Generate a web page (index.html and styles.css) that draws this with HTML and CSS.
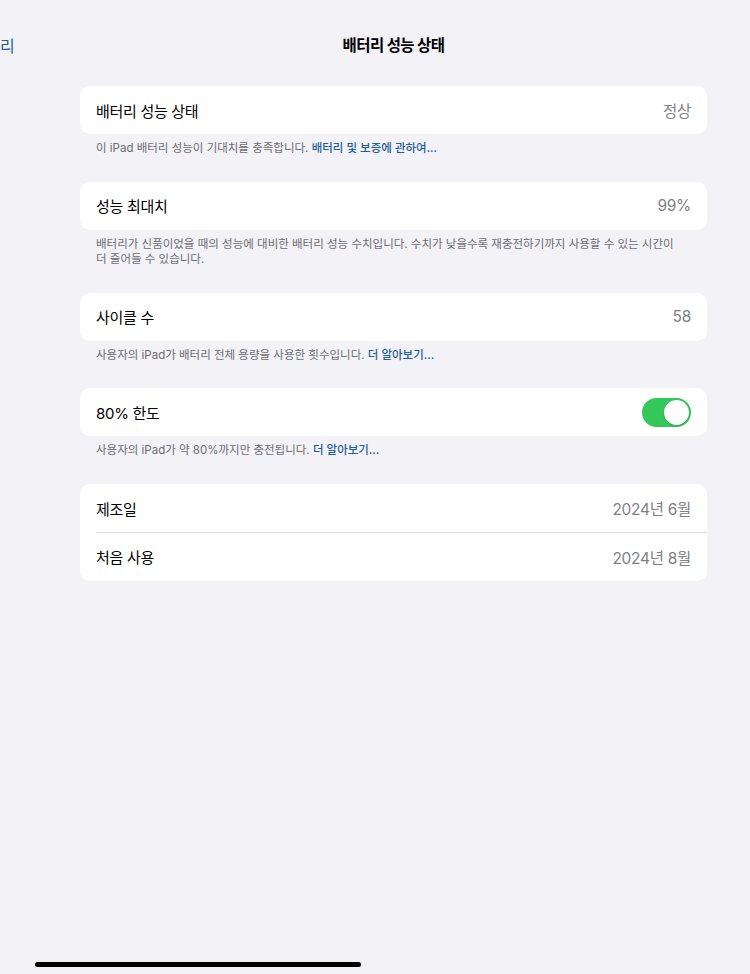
FILE: index.html
```html
<!DOCTYPE html>
<html lang="ko">
<head>
<meta charset="utf-8">
<title>배터리 성능 상태</title>
<link rel="stylesheet" href="styles.css">
</head>
<body>
<div class="screen">
  <header class="nav">
    <span class="back">리</span>
    <h1 class="title">배터리 성능 상태</h1>
  </header>
  <main class="content">
    <section class="group">
      <div class="card">
        <div class="row"><span class="label">배터리 성능 상태</span><span class="value">정상</span></div>
      </div>
      <p class="footer">이 iPad 배터리 성능이 기대치를 충족합니다. <a class="link">배터리 및 보증에 관하여...</a></p>
    </section>
    <section class="group">
      <div class="card">
        <div class="row"><span class="label">성능 최대치</span><span class="value">99%</span></div>
      </div>
      <p class="footer">배터리가 신품이었을 때의 성능에 대비한 배터리 성능 수치입니다. 수치가 낮을수록 재충전하기까지 사용할 수 있는 시간이 더 줄어들 수 있습니다.</p>
    </section>
    <section class="group">
      <div class="card">
        <div class="row"><span class="label">사이클 수</span><span class="value">58</span></div>
      </div>
      <p class="footer">사용자의 iPad가 배터리 전체 용량을 사용한 횟수입니다. <a class="link">더 알아보기...</a></p>
    </section>
    <section class="group">
      <div class="card">
        <div class="row"><span class="label">80% 한도</span><span class="toggle on"><span class="knob"></span></span></div>
      </div>
      <p class="footer">사용자의 iPad가 약 80%까지만 충전됩니다. <a class="link">더 알아보기...</a></p>
    </section>
    <section class="group">
      <div class="card">
        <div class="row divided"><span class="label">제조일</span><span class="value">2024년 6월</span></div>
        <div class="row"><span class="label">처음 사용</span><span class="value">2024년 8월</span></div>
      </div>
    </section>
  </main>
  <div class="home-indicator"></div>
</div>
</body>
</html>
```

FILE: styles.css
```css
html, body {
  margin: 0;
  padding: 0;
  background: #f2f2f7;
  overflow: hidden;
}

body {
  font-family: "Inter", "Noto Sans CJK KR", sans-serif;
  color: #000;
}

.screen {
  width: 750px;
  height: 974px;
  display: flex;
  flex-direction: column;
  overflow: hidden;
}

.nav {
  position: relative;
  padding: 35px 43px 0 80px;
  height: 22px;
}

.back {
  position: absolute;
  left: 0;
  top: 35px;
  font-size: 16px;
  line-height: 22px;
  color: #1f5f98;
}

.title {
  margin: 0;
  text-align: center;
  font-size: 15.5px;
  line-height: 22px;
  font-weight: 700;
  letter-spacing: -0.6px;
}

.content {
  padding: 29px 43px 0 80px;
  display: flex;
  flex-direction: column;
  gap: 25px;
}

.card {
  background: #fff;
  border-radius: 10px;
  overflow: hidden;
}

.row {
  height: 48px;
  display: flex;
  align-items: center;
  justify-content: space-between;
  padding: 0 16px;
  position: relative;
}

.row.divided {
  height: 49px;
}

.row.divided::after {
  content: "";
  position: absolute;
  left: 16px;
  right: 0;
  bottom: 0;
  height: 1px;
  background: #dcdce0;
}

.label {
  font-size: 15px;
  letter-spacing: -0.3px;
  font-weight: 400;
}

.value {
  font-size: 15.5px;
  color: #7f7f84;
  letter-spacing: -0.3px;
}

.footer {
  margin: 7px 0 0;
  padding: 0 24px 0 16px;
  font-size: 11.5px;
  line-height: 15.5px;
  color: #6d6d72;
}

.link {
  color: #1f5f98;
  font-weight: 500;
}

.toggle {
  width: 49px;
  height: 29px;
  border-radius: 15px;
  background: #34c759;
  display: flex;
  align-items: center;
  justify-content: flex-end;
  padding: 0 2px;
  box-sizing: border-box;
}

.knob {
  width: 25px;
  height: 25px;
  border-radius: 50%;
  background: #fff;
  box-shadow: 0 1px 2px rgba(0, 0, 0, 0.15);
}

.home-indicator {
  margin: auto 0 7px 35px;
  width: 326px;
  height: 5px;
  border-radius: 3px;
  background: #000;
}
```
